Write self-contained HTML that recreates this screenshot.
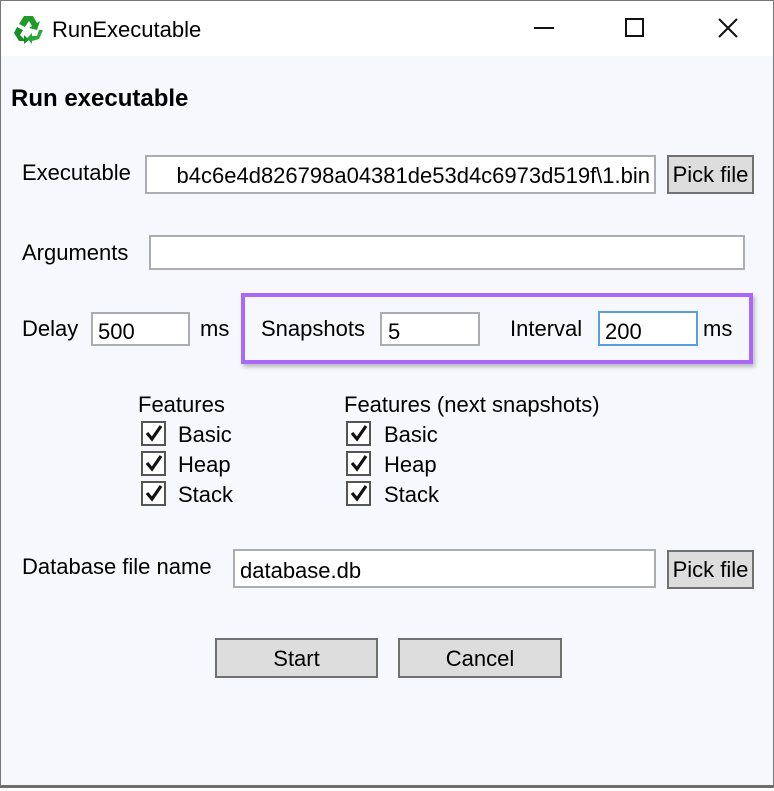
<!DOCTYPE html>
<html><head><meta charset="utf-8"><style>
*{box-sizing:border-box;margin:0;padding:0}
body{width:774px;height:791px;background:#fff;position:relative;overflow:hidden;font-family:"Liberation Sans",sans-serif;color:#000}
.a{position:absolute;white-space:nowrap}
.t{font-size:22px;line-height:26px}
.box{position:absolute;background:#fff;border:2px solid #abadb3}
.btn{position:absolute;background:#dddddd;border:2px solid #707070;font-size:22px;text-align:center}
.cb{position:absolute;width:25px;height:25px;border:2px solid #555;background:#fff}
</style></head><body>
<div class="a" style="left:0;top:0;width:774px;height:788px;border:1px solid #777;border-bottom:3px solid #6e6e6e;background:#f7f8fd"></div>
<div class="a" style="left:1px;top:1px;width:772px;height:55px;background:#fff"></div>
<svg class="a" style="left:13px;top:13px" width="32" height="32" viewBox="0 0 32 32">
<path d="M11 3 L20 3 L24 10 L27 8 L24 17 L16 15 L19 13 L16 8 L12 14 L6 11 Z" fill="#1f9a2b"/>
<path d="M4 14 L10 17 L7 22 L11 26 L11 22 L16 27 L11 31 L11 28 L6 28 L1 20 Z" fill="#159022"/>
<path d="M30 17 L26 26 L19 28 L19 31 L14 25 L19 20 L19 23 L24 23 L26 17 Z" fill="#27a837"/>
</svg>
<div class="a" style="left:52px;top:17px;font-size:22px">RunExecutable</div>
<div class="a" style="left:534px;top:27px;width:20px;height:2px;background:#111"></div>
<div class="a" style="left:625px;top:18px;width:19px;height:19px;border:2px solid #111"></div>
<svg class="a" style="left:718px;top:18px" width="20" height="20"><path d="M1 1L19 19M19 1L1 19" stroke="#111" stroke-width="2"/></svg>

<div class="a" style="left:11px;top:85px;font-size:24px;font-weight:bold">Run executable</div>

<div class="a t" style="left:22px;top:160px">Executable</div>
<div class="box t" style="left:145px;top:155px;width:511px;height:39px;overflow:hidden"><span style="position:absolute;right:4px;top:6px">b4c6e4d826798a04381de53d4c6973d519f\1.bin</span></div>
<div class="btn" style="left:667px;top:155px;width:87px;height:39px;line-height:36px">Pick file</div>

<div class="a t" style="left:22px;top:240px">Arguments</div>
<div class="box" style="left:149px;top:235px;width:596px;height:35px"></div>

<div class="a t" style="left:22px;top:316px">Delay</div>
<div class="box t" style="left:91px;top:312px;width:99px;height:34px;padding:5px 0 0 5px">500</div>
<div class="a t" style="left:200px;top:316px">ms</div>

<div class="a" style="left:241px;top:293px;width:512px;height:71px;border:4px solid #a968f7;box-shadow:2px 3px 4px rgba(0,0,0,.25)"></div>
<div class="a t" style="left:261px;top:316px">Snapshots</div>
<div class="box t" style="left:380px;top:312px;width:100px;height:34px;padding:5px 0 0 6px">5</div>
<div class="a t" style="left:510px;top:316px">Interval</div>
<div class="box t" style="left:598px;top:311px;width:100px;height:35px;padding:6px 0 0 5px;border-color:#5a9ee0">200</div>
<div class="a t" style="left:703px;top:316px">ms</div>

<div class="a t" style="left:138px;top:392px">Features</div>
<div class="a t" style="left:344px;top:392px">Features (next snapshots)</div>

<div class="cb" style="left:141px;top:421px"></div><div class="cb" style="left:141px;top:451px"></div><div class="cb" style="left:141px;top:481px"></div>
<div class="cb" style="left:346px;top:421px"></div><div class="cb" style="left:346px;top:451px"></div><div class="cb" style="left:346px;top:481px"></div>
<svg class="a" style="left:0;top:0" width="774" height="791">
<g fill="none" stroke="#111" stroke-width="3.2">
<path d="M147 433l5 6l9-13"/><path d="M147 463l5 6l9-13"/><path d="M147 493l5 6l9-13"/>
<path d="M352 433l5 6l9-13"/><path d="M352 463l5 6l9-13"/><path d="M352 493l5 6l9-13"/>
</g></svg>
<div class="a t" style="left:178px;top:422px">Basic</div>
<div class="a t" style="left:178px;top:452px">Heap</div>
<div class="a t" style="left:178px;top:482px">Stack</div>
<div class="a t" style="left:384px;top:422px">Basic</div>
<div class="a t" style="left:384px;top:452px">Heap</div>
<div class="a t" style="left:384px;top:482px">Stack</div>

<div class="a t" style="left:22px;top:554px">Database file name</div>
<div class="box t" style="left:233px;top:549px;width:423px;height:39px;padding:7px 0 0 5px">database.db</div>
<div class="btn" style="left:667px;top:550px;width:87px;height:39px;line-height:36px">Pick file</div>

<div class="btn" style="left:215px;top:638px;width:163px;height:40px;line-height:38px">Start</div>
<div class="btn" style="left:398px;top:638px;width:164px;height:40px;line-height:38px">Cancel</div>
</body></html>
